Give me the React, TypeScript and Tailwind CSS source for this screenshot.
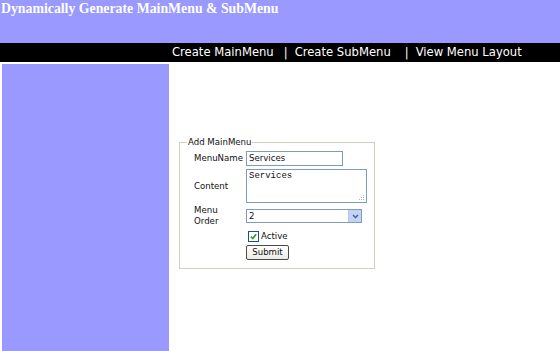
import React from "react";

export default function App() {
  return (
    <div className="w-[560px] h-[351px] overflow-hidden bg-white" style={{ fontFamily: '"DejaVu Sans", Verdana, sans-serif' }}>
      <div className="h-[43px] bg-[#9999ff]">
        <div className="pl-[1px] pt-[1px] text-white font-bold text-[13.8px] leading-[16px]" style={{ fontFamily: '"Liberation Serif", "Times New Roman", serif' }}>
          Dynamically Generate MainMenu &amp; SubMenu
        </div>
      </div>
      <div className="h-[19px] bg-black text-white text-[11.6px] leading-[19px] flex pl-[172px]">
        <span>Create MainMenu</span>
        <span className="ml-[10px]">|</span>
        <span className="ml-[7px]">Create SubMenu</span>
        <span className="ml-[14px]">|</span>
        <span className="ml-[7px]">View Menu Layout</span>
      </div>
      <div className="flex pt-[2px] h-[290px]">
        <div className="ml-[2px] w-[167px] bg-[#9999ff]" />
        <div className="pl-[10px] pt-[73px]">
          <fieldset className="w-[196px] min-w-0 h-[132px] border border-[#d0d0bf] pl-[14px] pr-[4px] pt-0 pb-0 text-[8.6px] text-[#111]">
            <legend className="ml-[-7px] px-[1px] text-[8.6px] leading-[10px]">Add MainMenu</legend>
            <div className="flex flex-col mt-[4px]">
              <div className="flex items-center h-[15px]">
                <div className="w-[52px]">MenuName</div>
                <div className="w-[97px] h-[15px] border border-[#7f9db9] bg-white pl-[2px] leading-[13px]">Services</div>
              </div>
              <div className="flex items-center h-[34px] mt-[3px]">
                <div className="w-[52px]">Content</div>
                <div className="relative w-[121px] h-[34px] border border-[#7f9db9] bg-white pl-[2px] pt-[1px] text-[9px] leading-[10px]" style={{ fontFamily: '"Liberation Mono", "Courier New", monospace' }}>
                  Services
                  <svg className="absolute right-[1px] bottom-[1px]" width="6" height="6" viewBox="0 0 6 6">
                    <rect x="4" y="0" width="1" height="1" fill="#b0b0b0" />
                    <rect x="2" y="2" width="1" height="1" fill="#b0b0b0" />
                    <rect x="4" y="2" width="1" height="1" fill="#b0b0b0" />
                    <rect x="0" y="4" width="1" height="1" fill="#b0b0b0" />
                    <rect x="2" y="4" width="1" height="1" fill="#b0b0b0" />
                    <rect x="4" y="4" width="1" height="1" fill="#b0b0b0" />
                  </svg>
                </div>
              </div>
              <div className="flex items-center h-[22px] mt-[2px]">
                <div className="w-[52px] leading-[11px]">Menu<br />Order</div>
                <div className="flex w-[116px] h-[14px] border border-[#7f9db9] bg-white">
                  <div className="flex-1 pl-[2px] leading-[12px]">2</div>
                  <div className="w-[13px] h-[12px] bg-[#c1d3fb] border-l border-[#b6c9f0] flex items-center justify-center">
                    <svg width="7" height="5" viewBox="0 0 7 5">
                      <path d="M1 1 L3.5 3.5 L6 1" stroke="#4d6185" strokeWidth="1.5" fill="none" />
                    </svg>
                  </div>
                </div>
              </div>
              <div className="flex items-center h-[11px] mt-[4px] pl-[54px]">
                <div className="w-[11px] h-[11px] border border-[#1c5180] bg-white flex items-center justify-center">
                  <svg width="7" height="7" viewBox="0 0 7 7">
                    <path d="M0.8 3.5 L2.8 5.5 L6.2 1.2" stroke="#21a121" strokeWidth="1.6" fill="none" />
                  </svg>
                </div>
                <span className="ml-[2px]">Active</span>
              </div>
              <div className="flex h-[15px] mt-[3px] pl-[52px]">
                <button className="w-[43px] h-[15px] border border-[#4a4a4a] rounded-[2px] bg-gradient-to-b from-white to-[#ecebe6] text-[8.6px] leading-[13px] text-[#111] p-0">Submit</button>
              </div>
            </div>
          </fieldset>
        </div>
      </div>
    </div>
  );
}
